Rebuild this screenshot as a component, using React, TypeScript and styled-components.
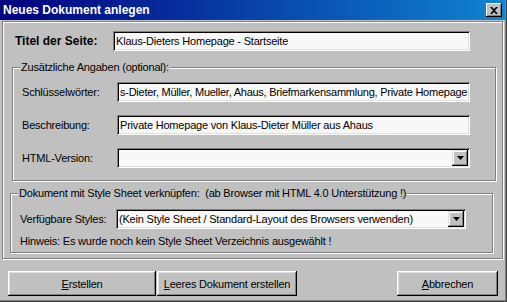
import React from "react";
import styled, { createGlobalStyle } from "styled-components";

const Global = createGlobalStyle`
  html, body { margin: 0; padding: 0; background: #c0c0c0; }
  body { font-family: "Liberation Sans", Arial, sans-serif; font-size: 11px; letter-spacing: -0.2px; color: #000; }
  * { box-sizing: border-box; }
`;

const Win = styled.div`
  width: 507px;
  height: 302px;
  background: #c0c0c0;
  display: flex;
  flex-direction: column;
  box-shadow: inset -1px -1px 0 #404040, inset -2px -2px 0 #808080;
  overflow: hidden;
`;

const TitleBar = styled.div`
  height: 20px;
  margin-right: 2px;
  background: linear-gradient(to right, #000080, #1084d0);
  display: flex;
  align-items: center;
  justify-content: space-between;
  padding: 0 3px 0 3px;
`;

const TitleText = styled.span`
  color: #fff;
  font-weight: bold;
  font-size: 12px;
  letter-spacing: 0;
`;

const CloseBtn = styled.div`
  width: 16px;
  height: 14px;
  background: #c0c0c0;
  box-shadow: inset -1px -1px 0 #000, inset 1px 1px 0 #fff, inset -2px -2px 0 #808080;
  display: flex;
  align-items: center;
  justify-content: center;
`;

const Body = styled.div`
  flex: 1;
  display: flex;
  flex-direction: column;
  padding: 1px 4px 0 2px;
`;

const Panel = styled.div`
  height: 238px;
  border: 1px solid #808080;
  box-shadow: inset 1px 1px 0 #fff, 1px 1px 0 #fff;
  display: flex;
  flex-direction: column;
  padding: 9px 0 0 0;
`;

const TitleRow = styled.div`
  display: flex;
  align-items: center;
  padding-left: 12px;
  height: 20px;
`;

const BoldLabel = styled.span`
  font-weight: bold;
  font-size: 12px;
  letter-spacing: 0;
  width: 98px;
`;

const Field = styled.div<{ $w: number }>`
  width: ${(p) => p.$w}px;
  height: 20px;
  background: #f8f8f8;
  box-shadow: inset 1px 1px 0 #808080, inset -1px -1px 0 #fff, inset 2px 2px 0 #000, inset -2px -2px 0 #dfdfdf;
  display: flex;
  align-items: center;
  padding: 0 2px 0 3px;
  overflow: hidden;
  white-space: nowrap;
  font-size: 11px;
`;

const FieldText = styled.span<{ $tight?: boolean }>`
  flex: 1;
  overflow: hidden;
  white-space: nowrap;
  letter-spacing: ${(p) => (p.$tight ? "-0.25px" : "-0.2px")};
`;

const Arrow = styled.div`
  width: 16px;
  height: 16px;
  flex: none;
  background: #c0c0c0;
  box-shadow: inset -1px -1px 0 #000, inset 1px 1px 0 #dfdfdf, inset -2px -2px 0 #808080, inset 2px 2px 0 #fff;
  display: flex;
  align-items: center;
  justify-content: center;
`;

const Group = styled.div<{ $ml: number; $mr: number; $mt: number; $h: number; $pt: number }>`
  position: relative;
  margin: ${(p) => p.$mt}px ${(p) => p.$mr}px 0 ${(p) => p.$ml}px;
  height: ${(p) => p.$h}px;
  border: 1px solid #808080;
  box-shadow: inset 1px 1px 0 #fff, 1px 1px 0 #fff;
  padding: ${(p) => p.$pt}px 0 0 9px;
  display: flex;
  flex-direction: column;
`;

const Caption = styled.span`
  position: absolute;
  top: -7px;
  left: 7px;
  background: #c0c0c0;
  padding: 0 1px;
  line-height: 13px;
`;

const Row = styled.div<{ $gap?: number }>`
  display: flex;
  align-items: center;
  margin-bottom: ${(p) => p.$gap ?? 0}px;
`;

const Label = styled.span<{ $w: number }>`
  width: ${(p) => p.$w}px;
  flex: none;
`;

const Hint = styled.div`
  margin-top: 6px;
`;

const ButtonRow = styled.div`
  display: flex;
  padding: 12px 0 0 6px;
`;

const Btn = styled.button<{ $w: number; $ml?: number }>`
  width: ${(p) => p.$w}px;
  height: 25px;
  margin-left: ${(p) => p.$ml ?? 0}px;
  background: #c0c0c0;
  border: none;
  padding: 0;
  font-family: "Liberation Sans", Arial, sans-serif;
  font-size: 11px;
  letter-spacing: -0.2px;
  color: #000;
  box-shadow: inset -1px -1px 0 #000, inset 1px 1px 0 #fff, inset -2px -2px 0 #808080, inset 2px 2px 0 #dfdfdf;
  u { text-decoration: underline; }
`;

const Tri = () => (
  <svg width="7" height="4" viewBox="0 0 7 4">
    <path d="M0 0h7L3.5 4z" fill="#000" />
  </svg>
);

export default function App() {
  return (
    <>
      <Global />
      <Win>
        <TitleBar>
          <TitleText>Neues Dokument anlegen</TitleText>
          <CloseBtn>
            <svg width="8" height="7" viewBox="0 0 8 7">
              <path d="M0 0h2l2 2 2-2h2L5 3.5 8 7H6L4 5 2 7H0l3-3.5z" fill="#000" />
            </svg>
          </CloseBtn>
        </TitleBar>
        <Body>
          <Panel>
            <TitleRow>
              <BoldLabel>Titel der Seite:</BoldLabel>
              <Field $w={357}>
                <FieldText>Klaus-Dieters Homepage - Startseite</FieldText>
              </Field>
            </TitleRow>
            <Group $ml={9} $mr={6} $mt={16} $h={114} $pt={14}>
              <Caption>Zusätzliche Angaben (optional):</Caption>
              <Row $gap={13}>
                <Label $w={95}>Schlüsselwörter:</Label>
                <Field $w={353}>
                  <FieldText $tight>s-Dieter, Müller, Mueller, Ahaus, Briefmarkensammlung, Private Homepage</FieldText>
                </Field>
              </Row>
              <Row $gap={13}>
                <Label $w={95}>Beschreibung:</Label>
                <Field $w={353}>
                  <FieldText>Private Homepage von Klaus-Dieter Müller aus Ahaus</FieldText>
                </Field>
              </Row>
              <Row>
                <Label $w={95}>HTML-Version:</Label>
                <Field $w={353}>
                  <FieldText />
                  <Arrow><Tri /></Arrow>
                </Field>
              </Row>
            </Group>
            <Group $ml={7} $mr={9} $mt={12} $h={60} $pt={15}>
              <Caption>Dokument mit Style Sheet verknüpfen:&nbsp; (ab Browser mit HTML 4.0 Unterstützung !)</Caption>
              <Row>
                <Label $w={96}>Verfügbare Styles:</Label>
                <Field $w={350}>
                  <FieldText>(Kein Style Sheet / Standard-Layout des Browsers verwenden)</FieldText>
                  <Arrow><Tri /></Arrow>
                </Field>
              </Row>
              <Hint>Hinweis: Es wurde noch kein Style Sheet Verzeichnis ausgewählt !</Hint>
            </Group>
          </Panel>
          <ButtonRow>
            <Btn $w={148}><u>E</u>rstellen</Btn>
            <Btn $w={140} $ml={1}><u>L</u>eeres Dokument erstellen</Btn>
            <Btn $w={101} $ml={100}><u>A</u>bbrechen</Btn>
          </ButtonRow>
        </Body>
      </Win>
    </>
  );
}
